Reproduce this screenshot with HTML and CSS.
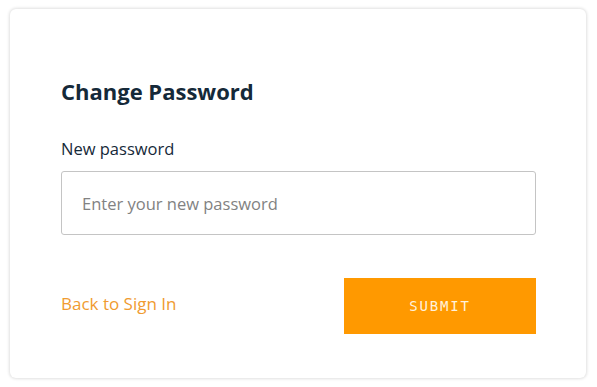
FILE: index.html
```html
<!DOCTYPE html>
<html>
<head>
<meta charset="utf-8">
<link rel="stylesheet" href="styles.css">
</head>
<body>
<div class="card">
  <h1 class="title">Change Password</h1>
  <label class="label" for="pw">New password</label>
  <input class="input" id="pw" type="password" placeholder="Enter your new password">
  <div class="footer">
    <a class="link" href="#">Back to Sign In</a>
    <button class="submit" type="button">SUBMIT</button>
  </div>
</div>
</body>
</html>
```
FILE: styles.css
```css
html, body {
  margin: 0;
  background: #ffffff;
}
body {
  padding: 9px 11px 9px 10px;
  font-family: "Open Sans", "Noto Sans", sans-serif;
  color: #152939;
}
.card {
  box-sizing: border-box;
  height: 369px;
  background: #ffffff;
  border-radius: 6px;
  box-shadow: 0 0 3px 1px rgba(0, 0, 0, 0.12);
  padding: 70px 50px 0 51px;
  display: flex;
  flex-direction: column;
}
.title {
  margin: 0;
  font-size: 22px;
  font-weight: 700;
  line-height: 24px;
  color: #152939;
}
.label {
  margin-top: 35px;
  font-size: 16.5px;
  line-height: 22px;
  color: #152939;
}
.input {
  box-sizing: border-box;
  margin-top: 11px;
  height: 64px;
  width: 100%;
  border: 1px solid #c4c4c4;
  border-radius: 3px;
  padding: 0 20px;
  font-family: "Open Sans", "Noto Sans", sans-serif;
  font-size: 16.5px;
  color: #152939;
  outline: none;
}
.input::placeholder {
  color: #828282;
}
.footer {
  margin-top: 43px;
  display: flex;
  justify-content: space-between;
  align-items: center;
}
.link {
  font-size: 17px;
  line-height: 22px;
  padding-bottom: 4px;
  color: #f09b30;
  text-decoration: none;
}
.submit {
  width: 192px;
  height: 56px;
  border: none;
  border-radius: 0;
  background: #ff9900;
  color: #fff1dc;
  font-family: "DejaVu Sans Mono", "Liberation Mono", monospace;
  font-size: 14px;
  letter-spacing: 1.8px;
  padding: 0;
}
```
